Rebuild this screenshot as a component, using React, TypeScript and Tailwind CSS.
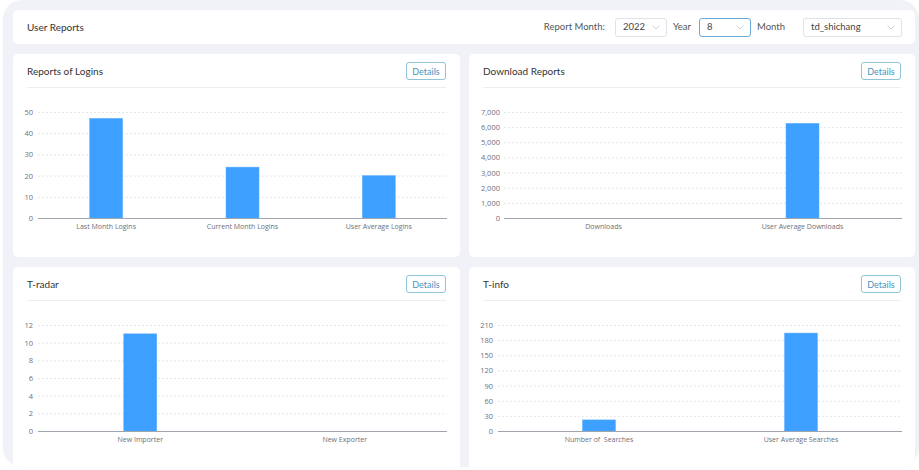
import React from "react";

type ChartProps = {
  width: number;
  labelRight: number;
  plotLeft: number;
  plotRight: number;
  ticks: string[];
  max: number;
  categories: string[];
  values: number[];
};

const TOP = 24;
const BOTTOM = 130;

function BarChart({ width, labelRight, plotLeft, plotRight, ticks, max, categories, values }: ChartProps) {
  const n = ticks.length - 1;
  const step = (BOTTOM - TOP) / n;
  const catW = (plotRight - plotLeft) / categories.length;
  const barW = 33;
  return (
    <svg width={width} height={168} className="block">
      {ticks.map((t, i) => {
        const y = BOTTOM - i * step;
        return (
          <g key={t}>
            {i > 0 && (
              <line x1={plotLeft} x2={plotRight} y1={y + 0.5} y2={y + 0.5} stroke="#e4e6ea" strokeWidth={1} strokeDasharray="2 2" />
            )}
            <text x={labelRight} y={y + 3} textAnchor="end" fontSize="7.5" fill="#6e7079" fontFamily="'Open Sans', sans-serif">
              {t}
            </text>
          </g>
        );
      })}
      {values.map((v, i) => {
        const cx = plotLeft + catW * i + catW / 2;
        const h = ((BOTTOM - TOP) * v) / max;
        return (
          <rect key={i} x={cx - barW / 2} y={BOTTOM - h} width={barW} height={h} fill="#3d9fff" stroke="#5fb0ff" strokeWidth={0.5} />
        );
      })}
      <line x1={plotLeft} x2={plotRight} y1={BOTTOM + 0.5} y2={BOTTOM + 0.5} stroke="#a0a4ac" strokeWidth={1} />
      {categories.map((c, i) => {
        const cx = plotLeft + catW * i + catW / 2;
        return (
          <text key={c} x={cx} y={BOTTOM + 10.5} textAnchor="middle" fontSize="7" fill="#6e7079" fontFamily="'Open Sans', sans-serif" xmlSpace="preserve">
            {c}
          </text>
        );
      })}
    </svg>
  );
}

function Chevron() {
  return (
    <svg width="8" height="5" viewBox="0 0 8 5" className="shrink-0">
      <polyline points="0.5,0.5 4,4 7.5,0.5" fill="none" stroke="#c0c4cc" strokeWidth="0.8" />
    </svg>
  );
}

function Select({ value, width, focused }: { value: string; width: string; focused?: boolean }) {
  return (
    <div
      className={`flex items-center justify-between h-[19px] rounded-[3px] border bg-white pl-[7px] pr-[6px] ${width} ${
        focused ? "border-[#6aa9d8]" : "border-[#dfe2e8]"
      }`}
    >
      <span className="text-[9.5px] text-[#444] leading-none">{value}</span>
      <Chevron />
    </div>
  );
}

function Card({ title, children, w }: { title: string; children: React.ReactNode; w: string }) {
  return (
    <div className={`bg-white rounded-[5px] h-[203px] ${w} flex flex-col`}>
      <div className="mx-[14px] flex items-center justify-between pt-[8px] pb-[7px] border-b border-[#eceef1]">
        <span className="text-[10px] text-[#333] leading-none">{title}</span>
        <button className="h-[18px] w-[40px] rounded-[3px] border border-[#8fc3d6] text-[9px] text-[#4a93bd] leading-none bg-white">
          Details
        </button>
      </div>
      {children}
    </div>
  );
}

export default function App() {
  return (
    <div className="w-[919px] h-[470px] bg-white font-['Lato',sans-serif]">
      <div className="ml-[3px] h-[467px] w-[916px] rounded-[20px] bg-[#f0f2f7] overflow-hidden pl-[10px] pr-[4px] pt-[10px] shadow-[0_0_3px_rgba(0,0,0,0.04)]">
        <div className="h-[34px] bg-white rounded-[5px] flex items-center pl-[14px] pr-[13px]">
          <span className="text-[10px] text-[#333] leading-none">User Reports</span>
          <div className="ml-auto flex items-center">
            <span className="text-[9.5px] text-[#555] leading-none">Report Month:</span>
            <div className="ml-[10px]">
              <Select value="2022" width="w-[52px]" />
            </div>
            <span className="ml-[6px] text-[9.5px] text-[#555] leading-none">Year</span>
            <div className="ml-[8px]">
              <Select value="8" width="w-[52px]" focused />
            </div>
            <span className="ml-[6px] w-[46px] text-[9.5px] text-[#555] leading-none">Month</span>
            <Select value="td_shichang" width="w-[99px]" />
          </div>
        </div>
        <div className="mt-[10px] grid grid-cols-[447px_446px] gap-x-[9px] gap-y-[10px]">
          <Card title="Reports of Logins" w="w-[447px]">
            <BarChart
              width={447}
              labelRight={20}
              plotLeft={25}
              plotRight={434}
              ticks={["0", "10", "20", "30", "40", "50"]}
              max={50}
              categories={["Last Month Logins", "Current Month Logins", "User Average Logins"]}
              values={[47, 24, 20]}
            />
          </Card>
          <Card title="Download Reports" w="w-[446px]">
            <BarChart
              width={446}
              labelRight={31}
              plotLeft={35}
              plotRight={433}
              ticks={["0", "1,000", "2,000", "3,000", "4,000", "5,000", "6,000", "7,000"]}
              max={7000}
              categories={["Downloads", "User Average Downloads"]}
              values={[0, 6250]}
            />
          </Card>
          <Card title="T-radar" w="w-[447px]">
            <BarChart
              width={447}
              labelRight={20}
              plotLeft={25}
              plotRight={434}
              ticks={["0", "2", "4", "6", "8", "10", "12"]}
              max={12}
              categories={["New Importer", "New Exporter"]}
              values={[11, 0]}
            />
          </Card>
          <Card title="T-info" w="w-[446px]">
            <BarChart
              width={446}
              labelRight={24}
              plotLeft={29}
              plotRight={433}
              ticks={["0", "30", "60", "90", "120", "150", "180", "210"]}
              max={210}
              categories={["Number of  Searches", "User Average Searches"]}
              values={[22, 194]}
            />
          </Card>
        </div>
      </div>
    </div>
  );
}
